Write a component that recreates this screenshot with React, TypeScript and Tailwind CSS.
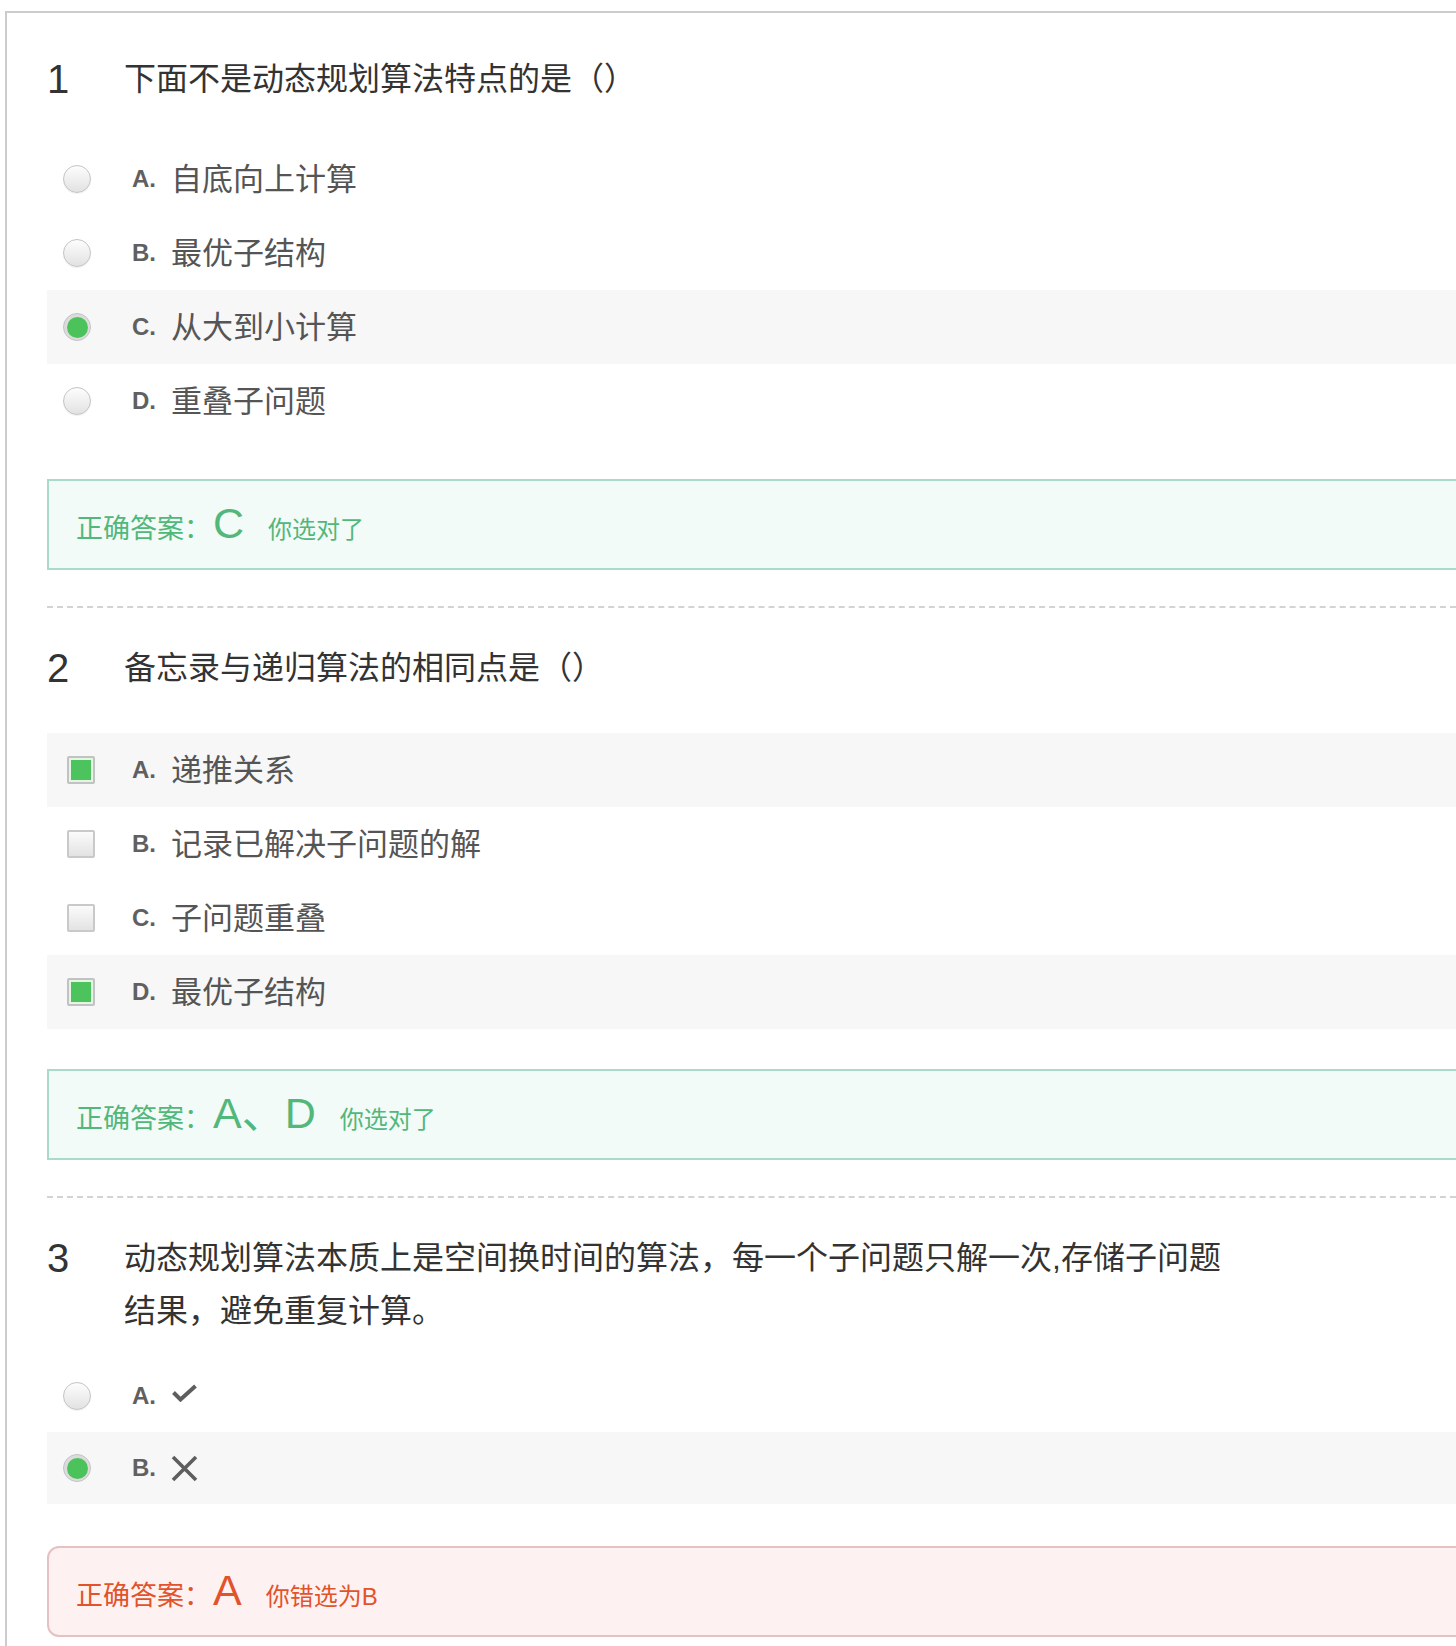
import React from "react";

type Option = {
  key: string;
  text?: string;
  icon?: "check" | "cross";
};

type Question = {
  no: number;
  kind: "radio" | "checkbox";
  text: string;
  options: Option[];
  selected: string[];
  answer: string;
  verdict: string;
  correct: boolean;
  headerClass: string;
  listClass: string;
  rowClass: string;
  boxClass: string;
};

const questions: Question[] = [
  {
    no: 1,
    kind: "radio",
    text: "下面不是动态规划算法特点的是（）",
    options: [
      { key: "A", text: "自底向上计算" },
      { key: "B", text: "最优子结构" },
      { key: "C", text: "从大到小计算" },
      { key: "D", text: "重叠子问题" },
    ],
    selected: ["C"],
    answer: "C",
    verdict: "你选对了",
    correct: true,
    headerClass: "pt-[40px]",
    listClass: "mt-[36px]",
    rowClass: "h-[74px]",
    boxClass: "mt-[41px]",
  },
  {
    no: 2,
    kind: "checkbox",
    text: "备忘录与递归算法的相同点是（）",
    options: [
      { key: "A", text: "递推关系" },
      { key: "B", text: "记录已解决子问题的解" },
      { key: "C", text: "子问题重叠" },
      { key: "D", text: "最优子结构" },
    ],
    selected: ["A", "D"],
    answer: "A、D",
    verdict: "你选对了",
    correct: true,
    headerClass: "pt-[34px]",
    listClass: "mt-[38px]",
    rowClass: "h-[74px]",
    boxClass: "mt-[40px]",
  },
  {
    no: 3,
    kind: "radio",
    text: "动态规划算法本质上是空间换时间的算法，每一个子问题只解一次,存储子问题结果，避免重复计算。",
    options: [
      { key: "A", icon: "check" },
      { key: "B", icon: "cross" },
    ],
    selected: ["B"],
    answer: "A",
    verdict: "你错选为B",
    correct: false,
    headerClass: "pt-[34px]",
    listClass: "mt-[22px]",
    rowClass: "h-[72px]",
    boxClass: "mt-[42px]",
  },
];

function Radio({ checked }: { checked: boolean }) {
  if (checked) {
    return (
      <span className="flex size-[28px] items-center justify-center rounded-full border border-[#c4c4c4] bg-[#dcdcdc]">
        <span className="size-[21px] rounded-full bg-[#4cc35a]" />
      </span>
    );
  }
  return (
    <span className="block size-[28px] rounded-full border border-[#c4c4c4] bg-linear-to-b from-[#fdfdfd] to-[#e2e2e2] shadow-[0_1px_1px_rgba(0,0,0,0.06)]" />
  );
}

function Checkbox({ checked }: { checked: boolean }) {
  if (checked) {
    return (
      <span className="ml-[4px] block size-[28px] rounded-[2px] border-2 border-[#c2c2c2] bg-[#e3f5e3] p-[2px]">
        <span className="block size-full bg-[#4cc35c]" />
      </span>
    );
  }
  return (
    <span className="ml-[4px] block size-[28px] rounded-[2px] border-2 border-[#c9c9c9] bg-linear-to-b from-[#fbfbfb] to-[#e3e3e3]" />
  );
}

function CheckMark() {
  return (
    <svg width="27" height="18" viewBox="0 0 27 18" fill="none">
      <path
        d="M2.5 8.5 L9.5 15.5 L24.5 2"
        stroke="#5e5e5e"
        strokeWidth="4"
        strokeLinecap="butt"
        strokeLinejoin="miter"
      />
    </svg>
  );
}

function Cross() {
  return (
    <svg width="27" height="27" viewBox="0 0 27 27" fill="none">
      <path d="M2 2 L25 25 M25 2 L2 25" stroke="#5e5e5e" strokeWidth="3.6" />
    </svg>
  );
}

function AnswerBox({ q }: { q: Question }) {
  const tone = q.correct
    ? "border-[#a9dbc8] bg-[#f2fbf7] text-[#52b77a]"
    : "rounded-[12px] border-[#e6c1c1] bg-[#fdf1f1] text-[#e2532c]";
  return (
    <div
      className={`${q.boxClass} ${tone} flex h-[91px] items-baseline border-2 pl-[27px] pt-[21px]`}
    >
      <span className="text-[27px] leading-none">正确答案：</span>
      <span className="ml-[2px] text-[43px] leading-none">{q.answer}</span>
      <span className="ml-[24px] text-[24px] leading-none">{q.verdict}</span>
    </div>
  );
}

function QuestionBlock({ q, last }: { q: Question; last: boolean }) {
  return (
    <section className={q.headerClass}>
      <div className="flex items-start">
        <div className="w-[77px] shrink-0 text-[40px] leading-[53px] text-[#333]">
          {q.no}
        </div>
        <div className="w-[1112px] text-[32px] leading-[53px] text-[#333]">
          {q.text}
        </div>
      </div>

      <ul className={q.listClass}>
        {q.options.map((opt) => {
          const isOn = q.selected.includes(opt.key);
          return (
            <li
              key={opt.key}
              className={`${q.rowClass} flex items-center pl-[16px] ${
                isOn ? "bg-[#f7f7f7]" : ""
              }`}
            >
              <div className="w-[69px] shrink-0">
                {q.kind === "radio" ? (
                  <Radio checked={isOn} />
                ) : (
                  <Checkbox checked={isOn} />
                )}
              </div>
              <span className="w-[39px] shrink-0 text-[24px] font-bold leading-none text-[#606060]">
                {opt.key}.
              </span>
              {opt.icon === "check" ? (
                <span className="-mt-[6px] flex">
                  <CheckMark />
                </span>
              ) : opt.icon === "cross" ? (
                <span className="flex">
                  <Cross />
                </span>
              ) : (
                <span className="text-[31px] leading-[31px] text-[#555]">
                  {opt.text}
                </span>
              )}
            </li>
          );
        })}
      </ul>

      <AnswerBox q={q} />

      {!last ? (
        <div className="mt-[36px] border-t-2 border-dashed border-[#d3d3d3]" />
      ) : null}
    </section>
  );
}

export default function App() {
  return (
    <div className="min-h-[1646px] overflow-hidden bg-white pt-[11px] pl-[5px] font-['Liberation_Sans','Noto_Sans_CJK_SC',sans-serif]">
      <div className="-mr-[20px] border-l-2 border-t-2 border-[#cccccc] pb-[10px] pl-[40px]">
        {questions.map((q, i) => (
          <QuestionBlock key={q.no} q={q} last={i === questions.length - 1} />
        ))}
      </div>
    </div>
  );
}
